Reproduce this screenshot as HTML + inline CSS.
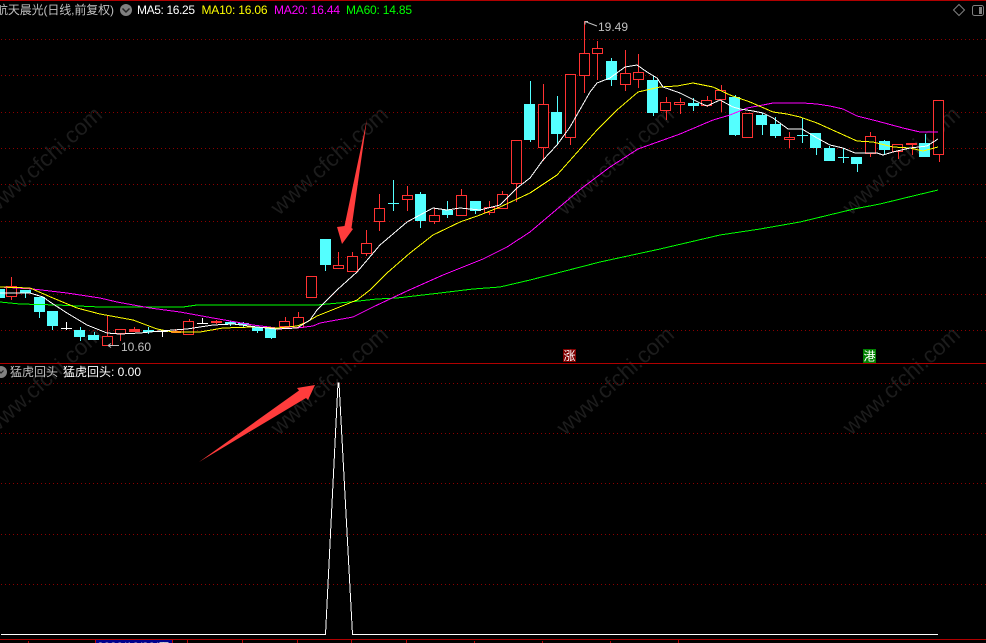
<!DOCTYPE html>
<html lang="zh"><head><meta charset="utf-8"><title>猛虎回头</title>
<style>
html,body{margin:0;padding:0;background:#000;width:986px;height:643px;overflow:hidden}
svg{display:block}
text{font-family:"Liberation Sans","Noto Sans CJK SC",sans-serif;font-size:12px}
.wm text{font-size:22.5px;fill:#1c1c1c}
.r rect{fill:#000;stroke:#ff3232;stroke-width:1}
.c rect{fill:#54ffff;stroke:none}
</style></head><body>
<svg width="986" height="643" viewBox="0 0 986 643" xmlns="http://www.w3.org/2000/svg">
<rect width="986" height="643" fill="#000"/>
<!-- watermark -->
<g class="wm">
<text transform="translate(-7,216) rotate(-42)">www.cfchi.com</text>
<text transform="translate(279,216) rotate(-42)">www.cfchi.com</text>
<text transform="translate(565,216) rotate(-42)">www.cfchi.com</text>
<text transform="translate(851,216) rotate(-42)">www.cfchi.com</text>
<text transform="translate(-7,436) rotate(-42)">www.cfchi.com</text>
<text transform="translate(279,436) rotate(-42)">www.cfchi.com</text>
<text transform="translate(565,436) rotate(-42)">www.cfchi.com</text>
<text transform="translate(851,436) rotate(-42)">www.cfchi.com</text>
</g>
<!-- grid -->
<path d="M1 39.5H986M1 75.5H986M1 112.5H986M1 148.5H986M1 184.5H986M1 221.5H986M1 257.5H986M1 294.5H986M1 330.5H986M1 383.5H986M1 433.5H986M1 483.5H986M1 534.5H986M1 584.5H986" stroke="#8c0000" stroke-width="1" stroke-dasharray="1 3" fill="none" shape-rendering="crispEdges"/>
<path d="M0 .5H986M0 363.5H986M0 639.5H986" stroke="#b00000" stroke-width="1" fill="none" shape-rendering="crispEdges"/>
<path d="M0 0V1" stroke="#b00000"/>
<!-- cyan candles -->
<g shape-rendering="crispEdges">
<path stroke="#54ffff" stroke-width="1" fill="none" d="M25.5 290V298M39.5 297V318M52.5 311V330M80.5 327V341M94.5 332V340M148.5 327V334M230.5 321V326M243.5 322V327M257.5 327V333M271.5 328V339M325.5 239V271M420.5 192V228M447.5 201V218M475.5 201V214M530.5 81V142M557.5 96V145M611.5 58V86M653.5 76V116M693.5 98V111M735.5 95V136M762.5 113V135M775.5 117V138M816.5 133V155M829.5 146V161M857.5 157V172M884.5 140V155M925.5 134V157M393.5 180V211M388 203.5H399M802.5 118V143M797 135.5H808M843.5 148V163M838 157.5H849"/>
<g class="c">
<rect x="0" y="289" width="5" height="9"/>
<rect x="20" y="290" width="11" height="3"/>
<rect x="34" y="297" width="11" height="15"/>
<rect x="47" y="311" width="11" height="15"/>
<rect x="74" y="330" width="11" height="7"/>
<rect x="88" y="335" width="11" height="5"/>
<rect x="143" y="330" width="11" height="2"/>
<rect x="225" y="322" width="11" height="2"/>
<rect x="238" y="323" width="11" height="2"/>
<rect x="252" y="327" width="11" height="4"/>
<rect x="265" y="328" width="11" height="10"/>
<rect x="320" y="239" width="11" height="26"/>
<rect x="415" y="194" width="11" height="27"/>
<rect x="442" y="210" width="11" height="5"/>
<rect x="470" y="201" width="11" height="10"/>
<rect x="524" y="104" width="11" height="36"/>
<rect x="551" y="112" width="11" height="22"/>
<rect x="606" y="61" width="11" height="19"/>
<rect x="647" y="80" width="11" height="33"/>
<rect x="688" y="103" width="11" height="3"/>
<rect x="729" y="97" width="11" height="38"/>
<rect x="756" y="115" width="11" height="10"/>
<rect x="770" y="124" width="11" height="12"/>
<rect x="810" y="133" width="11" height="15"/>
<rect x="824" y="148" width="11" height="13"/>
<rect x="851" y="157" width="11" height="7"/>
<rect x="879" y="141" width="11" height="9"/>
<rect x="919" y="143" width="11" height="14"/>
</g>
<!-- white crosses -->
<path stroke="#fff" stroke-width="1" fill="none" d="M66.5 322V330M61 328.5H72M162.5 330V337M157 331.5H168M202.5 318V323M197 323.5H208"/>
<!-- red wicks -->
<path stroke="#ff3232" stroke-width="1" fill="none" d="M11.5 277V286M11.5 297V300M107.5 315V336M120.5 334V341M134.5 327V332M175.5 329V333M189.5 319V321M216.5 320V324M285.5 317V321M298.5 312V317M338.5 252V265M352.5 252V256M366.5 230V243M366.5 253V256M379.5 194V208M379.5 222V231M407.5 186V195M407.5 199V211M434.5 208V215M434.5 222V224M461.5 189V195M489.5 201V207M489.5 212V215M502.5 191V194M516.5 184V202M543.5 84V104M543.5 148V161M570.5 138V145M584.5 21V53M584.5 75V93M597.5 41V48M597.5 53V80M625.5 50V73M625.5 85V91M638.5 54V72M638.5 80V88M666.5 97V102M666.5 111V120M680.5 98V114M707.5 96V107M721.5 85V90M721.5 99V112M789.5 132V148M870.5 132V136M870.5 153V157M898.5 151V159M912.5 143V155M939.5 154V162"/>
<!-- red filled flats -->
<g fill="#ff3232">
<rect x="129" y="329" width="11" height="3"/>
<rect x="171" y="331" width="10" height="2"/>
<rect x="211" y="321" width="11" height="2"/>
<rect x="906" y="143" width="11" height="2"/>
</g>
<g class="r">
<rect x="6.500" y="286.500" width="10" height="10"/>
<rect x="102.500" y="336.500" width="10" height="9"/>
<rect x="115.500" y="329.500" width="10" height="4"/>
<rect x="183.500" y="321.500" width="10" height="13"/>
<rect x="279.500" y="321.500" width="10" height="5"/>
<rect x="293.500" y="317.500" width="10" height="10"/>
<rect x="306.500" y="276.500" width="10" height="21"/>
<rect x="333.500" y="265.500" width="10" height="3"/>
<rect x="347.500" y="256.500" width="10" height="15"/>
<rect x="361.500" y="243.500" width="10" height="10"/>
<rect x="374.500" y="208.500" width="10" height="13"/>
<rect x="402.500" y="195.500" width="10" height="4"/>
<rect x="429.500" y="215.500" width="10" height="6"/>
<rect x="456.500" y="195.500" width="10" height="20"/>
<rect x="484.500" y="207.500" width="10" height="5"/>
<rect x="497.500" y="194.500" width="10" height="14"/>
<rect x="511.500" y="140.500" width="10" height="43"/>
<rect x="538.500" y="104.500" width="10" height="43"/>
<rect x="565.500" y="74.500" width="10" height="63"/>
<rect x="579.500" y="53.500" width="10" height="22"/>
<rect x="592.500" y="48.500" width="10" height="5"/>
<rect x="620.500" y="73.500" width="10" height="11"/>
<rect x="633.500" y="72.500" width="10" height="7"/>
<rect x="660.500" y="102.500" width="10" height="8"/>
<rect x="674.500" y="102.500" width="10" height="2"/>
<rect x="701.500" y="100.500" width="10" height="5"/>
<rect x="715.500" y="90.500" width="10" height="9"/>
<rect x="742.500" y="113.500" width="10" height="24"/>
<rect x="784.500" y="137.500" width="10" height="2"/>
<rect x="865.500" y="136.500" width="10" height="17"/>
<rect x="892.500" y="144.500" width="10" height="7"/>
<rect x="933.500" y="100.500" width="10" height="54"/>
</g>
<!-- MA lines -->
<g fill="none" stroke-width="1">
<polyline stroke="#00ff00" points="0,302 20,304 57,305 100,307 183,307 197,305 317,305 350,302 377,299 397,298 440,293 473,289 500,287 530,280 600,262 660,249 720,235 760,229 800,222 854,209 880,204 917,195 938,190"/>
<polyline stroke="#ff00ff" points="0,287 33,289 67,293 100,298 117,302 150,308 180,312 213,318 253,325 277,328 297,328 313,326 320,323 353,317 373,307 407,291 443,275 483,259 507,247 530,232 582,188 610,167 638,149 680,134 713,120 730,115 747,108 763,105 773,103 803,103 817,104 830,106 843,109 857,116 877,121 903,128 920,132 938,132"/>
<polyline stroke="#ffff00" points="0,287 30,288 53,298 77,308 100,314 133,320 157,329 173,332 200,332 223,328 253,327 277,328 297,326 307,322 317,316 337,308 357,300 370,290 387,273 410,253 433,235 460,222 480,215 500,207 530,193 557,175 573,157 597,130 617,110 638,92 660,87 677,86 693,83 713,87 730,95 750,102 773,112 787,114 800,117 817,123 837,132 857,141 873,142 893,147 910,148 923,151 938,147"/>
<polyline stroke="#ffffff" points="0,293 30,293 43,297 50,302 67,313 87,325 107,333 120,334 140,333 160,331 187,329 213,325 233,324 257,327 277,329 297,328 310,320 317,310 337,290 357,272 380,245 407,222 433,208 447,210 460,208 480,210 500,205 517,188 530,178 543,160 557,145 570,127 590,92 597,83 610,78 625,67 637,65 647,72 657,78 663,87 680,93 700,103 707,106 720,100 733,107 740,109 753,111 763,113 773,118 788,129 802,129 817,138 830,145 843,148 855,153 877,153 883,155 893,152 910,148 927,146 938,139"/>
</g>
<!-- indicator -->
<polyline fill="none" stroke="#fff" stroke-width="1" points="1,634.500 325.500,634.500 338,383 339,383 352.500,634.500 938,634.500"/>
<!-- axis ticks -->
<path stroke="#c00000" stroke-width="1" fill="none" d="M28.500 641V643M95.500 640V643M172.500 640V643M187.500 640V643M242.500 640V643M297.500 640V643M351.500 640V643M406.500 640V643M474.500 641V643M542.500 641V643M610.500 641V643M678.500 640V643"/>
<rect x="96" y="640" width="76" height="3" fill="#00008c"/>
</g>
<text x="97" y="651" fill="#d0d0d0" textLength="73">2020/10/30/五</text>
<!-- arrows -->
<path fill="#ff3c3c" d="M367 119 344.500 226 337 227 342 244 353 229 351.500 228Z"/>
<path fill="#ff3c3c" d="M199 462 299 390.500 297 388 315 385 308 400 306 398Z"/>
<!-- price labels -->
<path d="M108 345.500H119M108 345.500l3 -2M108 345.500l3 2" stroke="#c0c0c0" fill="none"/>
<text x="121" y="351" fill="#c0c0c0" textLength="30">10.60</text>
<path d="M585 21.500 597 26M585 21.500h3M585 21.500v3" stroke="#c0c0c0" fill="none"/>
<text x="598" y="31" fill="#c0c0c0" textLength="30">19.49</text>
<!-- header -->
<text x="-4" y="14" fill="#c0c0c0" textLength="118">航天晨光(日线,前复权)</text>
<circle cx="126" cy="10" r="6" fill="#808080"/>
<path d="M122.500 8.500 126 12 129.500 8.500" fill="none" stroke="#222" stroke-width="1.500"/>
<text x="137" y="14" fill="#fff" textLength="58">MA5: 16.25</text>
<text x="201.500" y="14" fill="#ffff00" textLength="66">MA10: 16.06</text>
<text x="274" y="14" fill="#ff00ff" textLength="66">MA20: 16.44</text>
<text x="346" y="14" fill="#00ff00" textLength="66">MA60: 14.85</text>
<path d="M959 4.500 964.500 10 959 15.500 953.500 10Z" fill="none" stroke="#808080"/>
<rect x="972.500" y="5.500" width="11" height="10" rx="2" fill="none" stroke="#808080"/>
<rect x="979" y="7" width="3" height="7" fill="#808080"/>
<!-- badges -->
<rect x="563" y="349" width="13" height="13" fill="#7f0000"/>
<text x="563.500" y="360" fill="#fff" style="font-size:12px">涨</text>
<rect x="863" y="349" width="13" height="14" fill="#008000"/>
<text x="863.500" y="360.500" fill="#fff" style="font-size:12px">港</text>
<!-- sub-panel header -->
<circle cx="1" cy="372" r="6" fill="#808080"/>
<path d="M-1 371 1 373 3.500 370.500" fill="none" stroke="#222" stroke-width="1.200"/>
<text x="10" y="376" fill="#c0c0c0">猛虎回头</text>
<text x="63" y="376" fill="#fff" textLength="78">猛虎回头: 0.00</text>
</svg>
</body></html>
